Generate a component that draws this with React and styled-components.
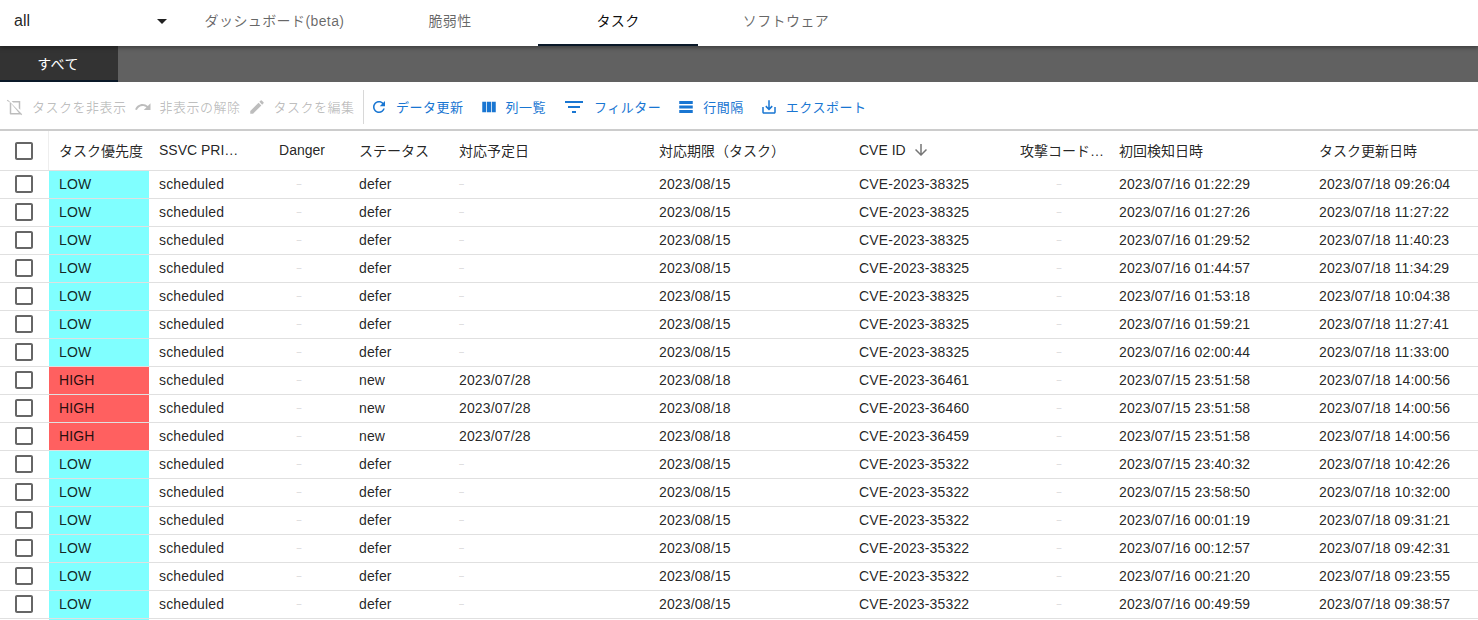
import React from "react";
import styled, { createGlobalStyle } from "styled-components";

const GlobalStyle = createGlobalStyle`
  html, body {
    margin: 0;
    height: 100%;
    overflow: hidden;
    background: white;
    font-family: "Liberation Sans", "Noto Sans CJK JP", sans-serif;
    font-size: 14px;
    color: rgba(0, 0, 0, 0.87);
  }
`;

const COLUMNS = "49px 100px 100px 100px 100px 200px 200px 160px 100px 200px 200px";

const Page = styled.div`
  width: 1478px;
  height: 620px;
  overflow: hidden;
`;

const TopBar = styled.header`
  height: 46px;
  display: flex;
  align-items: stretch;
  background-color: white;
  position: relative;
  z-index: 2;
  box-shadow: 0 2px 4px rgba(0, 0, 0, 0.35);
`;

const ProjectSelect = styled.div`
  width: 187px;
  box-sizing: border-box;
  padding: 0 13px 4px 14px;
  display: flex;
  justify-content: space-between;
  align-items: center;
  font-size: 16px;
`;

const NavTab = styled.div`
  width: ${(props) => props.$width || 160}px;
  margin-right: 8px;
  display: flex;
  align-items: center;
  justify-content: center;
  box-sizing: border-box;
  padding-bottom: 4px;
  letter-spacing: 0.4px;
  white-space: nowrap;
  color: ${(props) => (props.$active ? "rgba(0, 0, 0, 0.95)" : "rgba(0, 0, 0, 0.6)")};
  border-bottom: 2px solid ${(props) => (props.$active ? "#0a1929" : "transparent")};
`;

const SubBar = styled.div`
  height: 36px;
  display: flex;
  background-color: #616161;
`;

const SubTab = styled.div`
  width: 118px;
  box-sizing: border-box;
  padding-right: 2px;
  display: flex;
  align-items: center;
  justify-content: center;
  color: white;
  letter-spacing: 0.4px;
  background-color: #333333;
  border-bottom: 2px solid #0a1929;
`;

const Toolbar = styled.div`
  box-sizing: border-box;
  height: 49px;
  padding: 2px 0 0 6px;
  display: flex;
  align-items: center;
  border-bottom: 2px solid #cccccc;
`;

const ToolGroup = styled.div`
  display: flex;
  align-items: center;
  gap: ${(props) => props.$gap}px;
`;

const ToolButton = styled.div`
  display: flex;
  align-items: center;
  gap: 8px;
  font-size: 13px;
  letter-spacing: 0.5px;
  white-space: nowrap;
  color: ${(props) => (props.$disabled ? "rgba(0, 0, 0, 0.26)" : "#1976d2")};
`;

const Divider = styled.div`
  width: 1px;
  height: 34px;
  margin: 0 6px 0 8.5px;
  background-color: #d8d8d8;
`;

const Icon = styled.svg`
  width: ${(props) => props.$size || 18}px;
  height: ${(props) => props.$size || 18}px;
  flex: none;
  fill: currentColor;
`;

const HeaderRow = styled.div`
  display: grid;
  grid-template-columns: ${COLUMNS};
  height: 39px;
  border-bottom: 1px solid #e0e0e0;
`;

const Row = styled.div`
  display: grid;
  grid-template-columns: ${COLUMNS};
  height: 27px;
  border-bottom: 1px solid #e0e0e0;
`;

const CheckCell = styled.div`
  display: flex;
  align-items: center;
  justify-content: center;
  box-sizing: border-box;
  padding: 0 1px ${(props) => (props.$header ? 0 : 1)}px 0;
  color: rgba(0, 0, 0, 0.6);
  border-right: ${(props) => (props.$header ? "1px solid #eeeeee" : "none")};
`;

const HeadCell = styled.div`
  display: flex;
  align-items: center;
  justify-content: ${(props) => (props.$center ? "center" : "flex-start")};
  gap: 6px;
  padding: 0 10px 2px ${(props) => (props.$center ? 16 : 10)}px;
  white-space: nowrap;
`;

const SortIcon = styled(Icon)`
  color: rgba(0, 0, 0, 0.54);
`;

const Cell = styled.div`
  display: flex;
  align-items: center;
  justify-content: ${(props) => (props.$center ? "center" : "flex-start")};
  padding: 0 10px 2px;
  white-space: nowrap;
  letter-spacing: 0.15px;
  background-color: ${(props) =>
    props.$level === "LOW" ? "#80ffff" : props.$level === "HIGH" ? "#ff6060" : "transparent"};
`;

const Empty = styled.span`
  color: rgba(0, 0, 0, 0.22);
  font-size: 9px;
`;

const CheckBox = () => (
  <Icon viewBox="0 0 24 24" $size={24}>
    <path d="M19 5v14H5V5h14m0-2H5c-1.1 0-2 .9-2 2v14c0 1.1.9 2 2 2h14c1.1 0 2-.9 2-2V5c0-1.1-.9-2-2-2z" />
  </Icon>
);

const icons = {
  hide: "M7.5 4H19v11.5l-2-2V6H9.5zM2.4 2.4l19.2 19.2-1.4 1.4-1.3-1.3c-.2.2-.5.3-.9.3H6c-.6 0-1-.4-1-1V5.8L1 3.8zM7 7.8V20h10.2z",
  redo: "M18.4 10.6C16.55 8.99 14.15 8 11.5 8c-4.65 0-8.58 3.03-9.96 7.22L3.9 16c1.05-3.19 4.05-5.5 7.6-5.5 1.95 0 3.73.72 5.12 1.88L13 16h9V7l-3.6 3.6z",
  edit: "M3 17.25V21h3.75L17.81 9.94l-3.75-3.75L3 17.25zM20.71 7.04c.39-.39.39-1.02 0-1.41l-2.34-2.34a.9959.9959 0 00-1.41 0l-1.83 1.83 3.75 3.75 1.83-1.83z",
  refresh: "M17.65 6.35C16.2 4.9 14.21 4 12 4c-4.42 0-7.99 3.58-7.99 8s3.57 8 7.99 8c3.73 0 6.84-2.55 7.73-6h-2.08c-.82 2.33-3.04 4-5.65 4-3.31 0-6-2.69-6-6s2.69-6 6-6c1.66 0 3.14.69 4.22 1.78L13 11h7V4l-2.35 2.35z",
  columns: "M14.67 5v14H9.33V5h5.34zm1 14H21V5h-5.33v14zm-7.34 0V5H3v14h5.33z",
  filter: "M10 18h4v-2h-4v2zM3 6v2h18V6H3zm3 7h12v-2H6v2z",
  density: "M21 8H3V4h18v4zm0 2H3v4h18v-4zm0 6H3v4h18v-4z",
  export: "M19 12v7H5v-7H3v7c0 1.1.9 2 2 2h14c1.1 0 2-.9 2-2v-7h-2zm-6 .67l2.59-2.58L17 11.5l-5 5-5-5 1.41-1.41L11 12.67V3h2z",
};

const Tool = ({ icon, size, disabled, children }) => (
  <ToolButton $disabled={disabled}>
    <Icon viewBox="0 0 24 24" $size={size}>
      <path d={icons[icon]} />
    </Icon>
    {children}
  </ToolButton>
);

const low = (first, updated, cve = "CVE-2023-38325") => ({
  level: "LOW",
  status: "defer",
  planned: null,
  due: "2023/08/15",
  cve,
  first,
  updated,
});

const high = (cve) => ({
  level: "HIGH",
  status: "new",
  planned: "2023/07/28",
  due: "2023/08/18",
  cve,
  first: "2023/07/15 23:51:58",
  updated: "2023/07/18 14:00:56",
});

const rows = [
  low("2023/07/16 01:22:29", "2023/07/18 09:26:04"),
  low("2023/07/16 01:27:26", "2023/07/18 11:27:22"),
  low("2023/07/16 01:29:52", "2023/07/18 11:40:23"),
  low("2023/07/16 01:44:57", "2023/07/18 11:34:29"),
  low("2023/07/16 01:53:18", "2023/07/18 10:04:38"),
  low("2023/07/16 01:59:21", "2023/07/18 11:27:41"),
  low("2023/07/16 02:00:44", "2023/07/18 11:33:00"),
  high("CVE-2023-36461"),
  high("CVE-2023-36460"),
  high("CVE-2023-36459"),
  low("2023/07/15 23:40:32", "2023/07/18 10:42:26", "CVE-2023-35322"),
  low("2023/07/15 23:58:50", "2023/07/18 10:32:00", "CVE-2023-35322"),
  low("2023/07/16 00:01:19", "2023/07/18 09:31:21", "CVE-2023-35322"),
  low("2023/07/16 00:12:57", "2023/07/18 09:42:31", "CVE-2023-35322"),
  low("2023/07/16 00:21:20", "2023/07/18 09:23:55", "CVE-2023-35322"),
  low("2023/07/16 00:49:59", "2023/07/18 09:38:57", "CVE-2023-35322"),
];

const App = () => {
  return (
    <Page>
      <GlobalStyle />
      <TopBar>
        <ProjectSelect>
          all
          <Icon viewBox="0 0 24 24" $size={24}>
            <path d="M7 10l5 5 5-5z" />
          </Icon>
        </ProjectSelect>
        <NavTab $width={175}>ダッシュボード(beta)</NavTab>
        <NavTab>脆弱性</NavTab>
        <NavTab $active>タスク</NavTab>
        <NavTab>ソフトウェア</NavTab>
      </TopBar>
      <SubBar>
        <SubTab>すべて</SubTab>
      </SubBar>
      <Toolbar>
        <ToolGroup $gap={7}>
          <Tool icon="hide" disabled>タスクを非表示</Tool>
          <Tool icon="redo" disabled>非表示の解除</Tool>
          <Tool icon="edit" disabled>タスクを編集</Tool>
        </ToolGroup>
        <Divider />
        <ToolGroup $gap={16}>
          <Tool icon="refresh">データ更新</Tool>
          <Tool icon="columns">列一覧</Tool>
          <Tool icon="filter" size={24}>フィルター</Tool>
          <Tool icon="density">行間隔</Tool>
          <Tool icon="export">エクスポート</Tool>
        </ToolGroup>
      </Toolbar>
      <HeaderRow>
        <CheckCell $header>
          <CheckBox />
        </CheckCell>
        <HeadCell>タスク優先度</HeadCell>
        <HeadCell>SSVC PRI…</HeadCell>
        <HeadCell $center>Danger</HeadCell>
        <HeadCell>ステータス</HeadCell>
        <HeadCell>対応予定日</HeadCell>
        <HeadCell>対応期限（タスク）</HeadCell>
        <HeadCell>
          CVE ID
          <SortIcon viewBox="0 0 24 24">
            <path d="M20 12l-1.41-1.41L13 16.17V4h-2v12.17l-5.58-5.59L4 12l8 8 8-8z" />
          </SortIcon>
        </HeadCell>
        <HeadCell $center>攻撃コード…</HeadCell>
        <HeadCell>初回検知日時</HeadCell>
        <HeadCell>タスク更新日時</HeadCell>
      </HeaderRow>
      {rows.map((row, i) => (
        <Row key={i}>
          <CheckCell>
            <CheckBox />
          </CheckCell>
          <Cell $level={row.level}>{row.level}</Cell>
          <Cell>scheduled</Cell>
          <Cell $center><Empty>–</Empty></Cell>
          <Cell>{row.status}</Cell>
          <Cell>{row.planned || <Empty>–</Empty>}</Cell>
          <Cell>{row.due}</Cell>
          <Cell>{row.cve}</Cell>
          <Cell $center><Empty>–</Empty></Cell>
          <Cell>{row.first}</Cell>
          <Cell>{row.updated}</Cell>
        </Row>
      ))}
      <Row>
        <CheckCell />
        <Cell $level="LOW" />
      </Row>
    </Page>
  );
};

export default App;
